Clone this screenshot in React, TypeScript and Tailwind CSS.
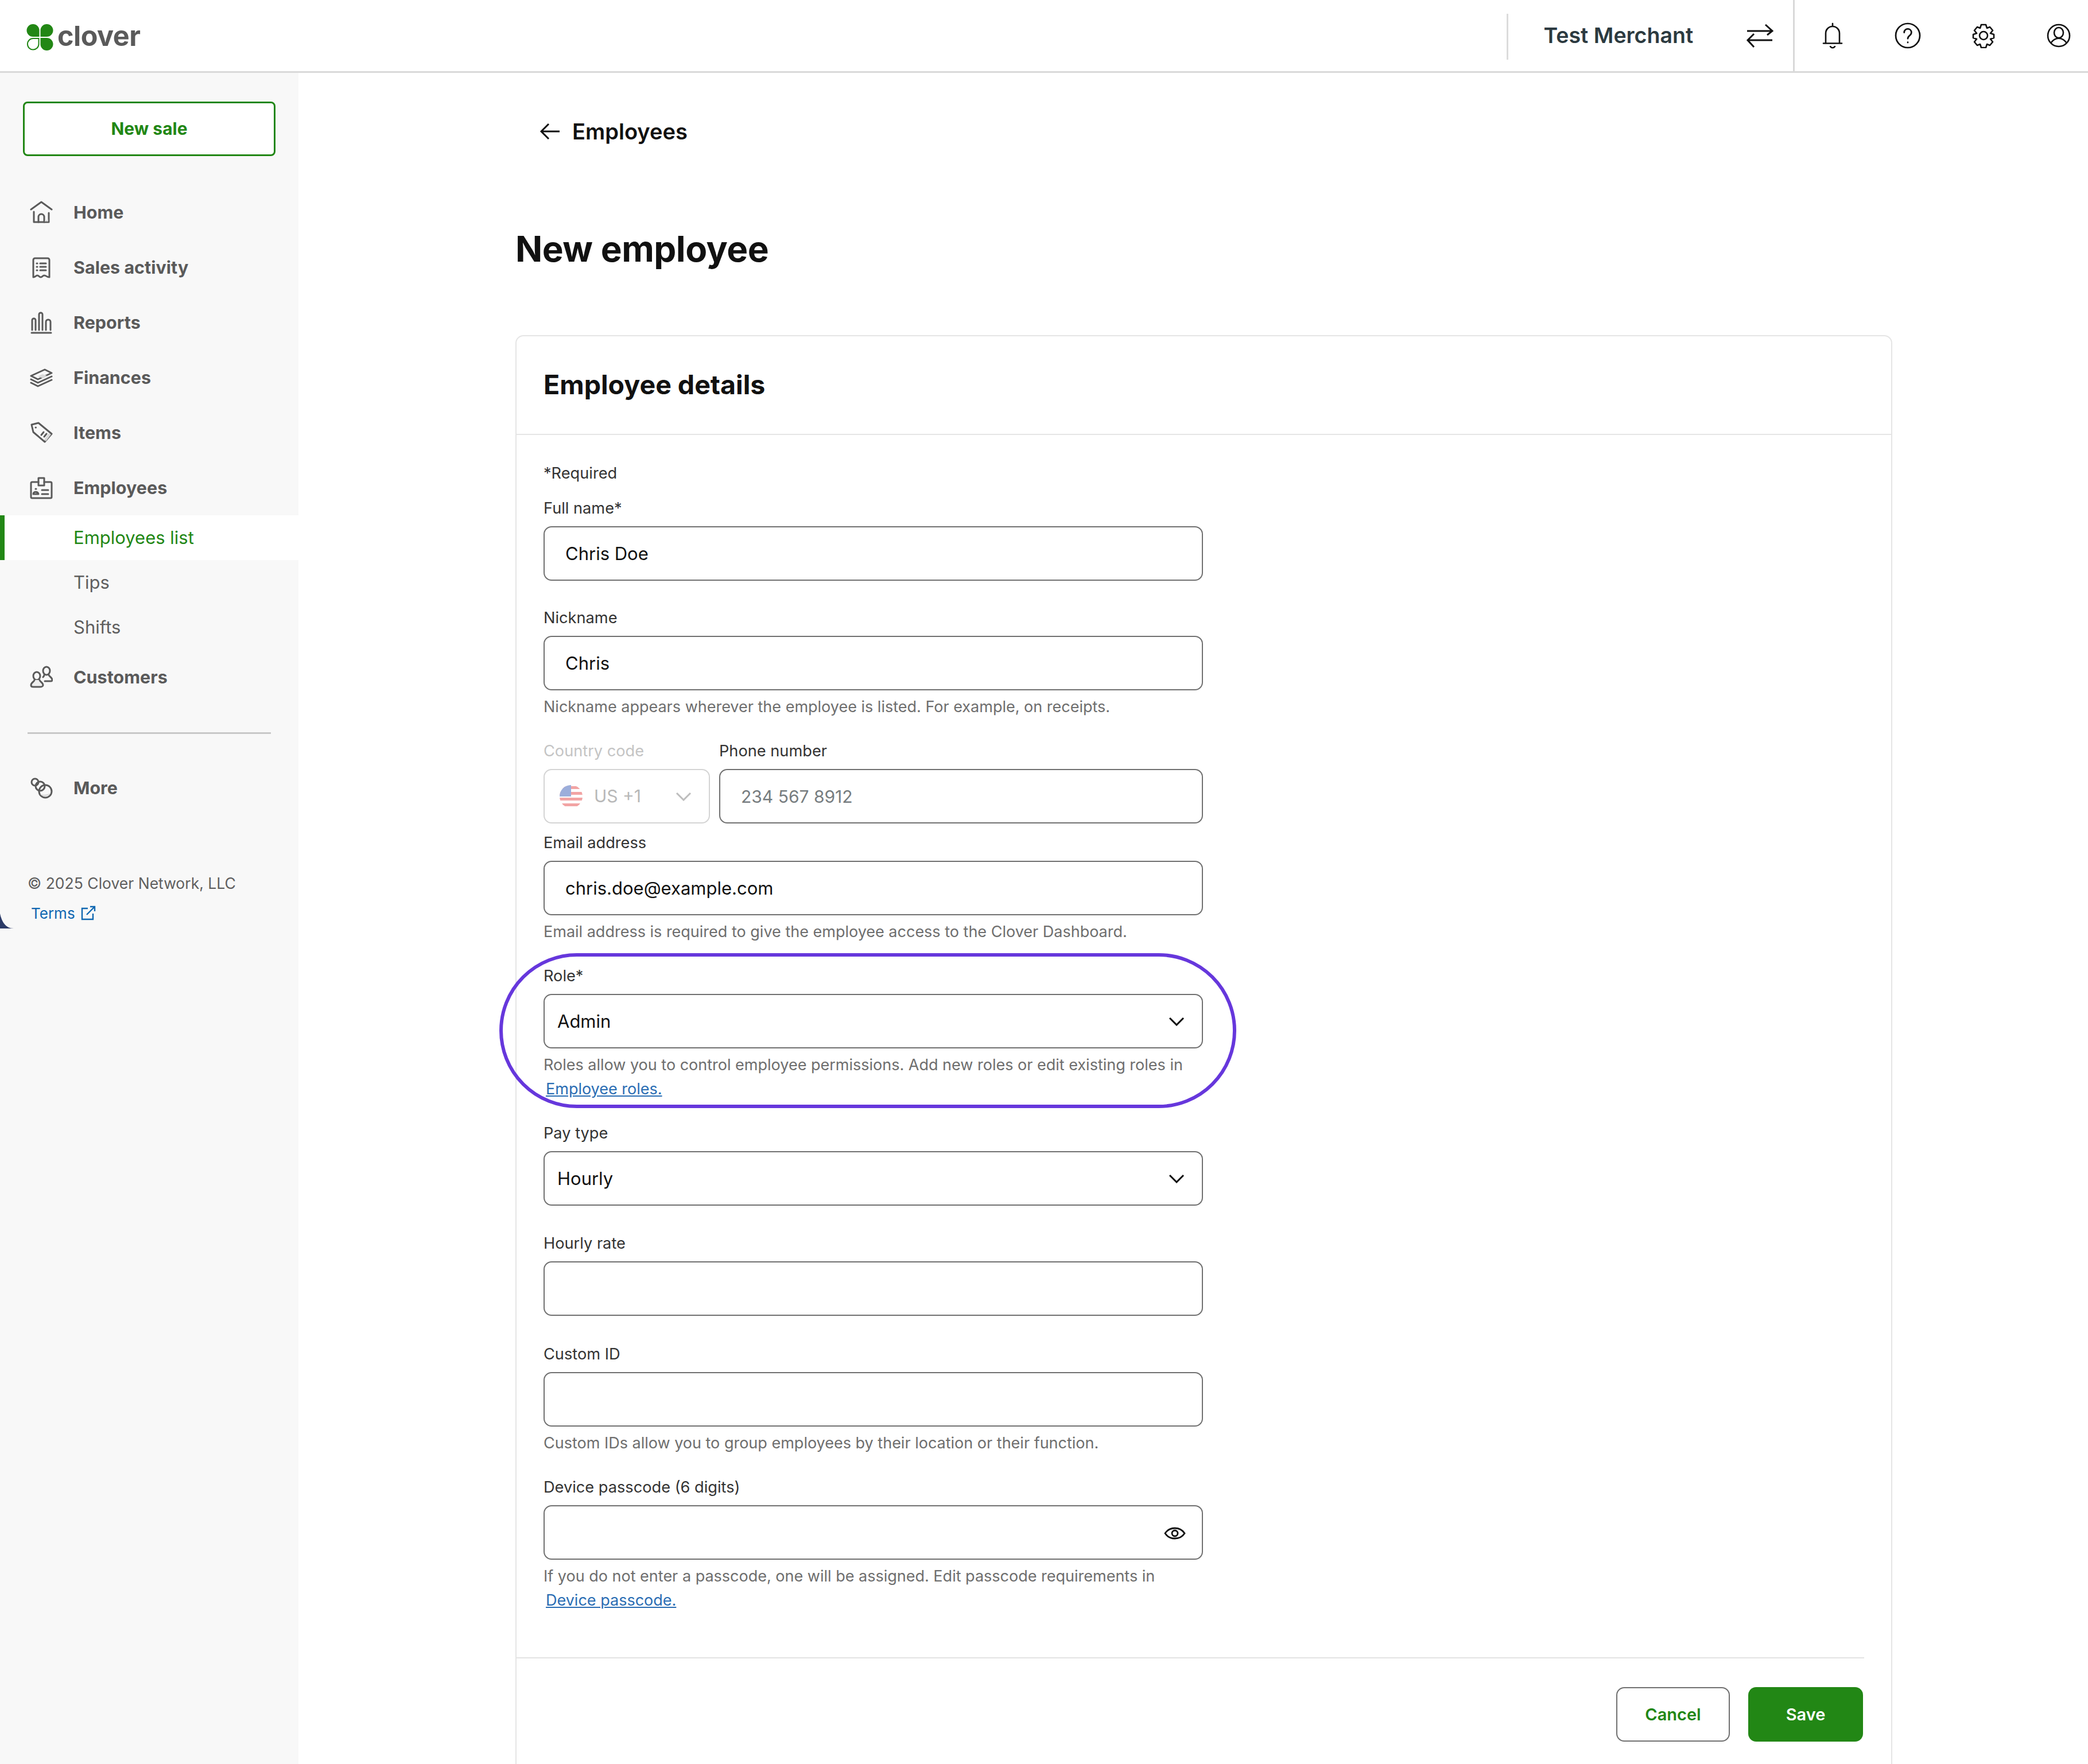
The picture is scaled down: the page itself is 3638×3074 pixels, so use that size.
import type { ReactNode } from "react";

const ink = "#5a5a5a";

function NavSvg({ children }: { children: ReactNode }) {
  return (
    <svg viewBox="0 0 40 40" fill="none" stroke={ink} strokeWidth={3} strokeLinecap="round" strokeLinejoin="round" className="w-[40px] h-[40px]">
      {children}
    </svg>
  );
}

const HomeIcon = () => (
  <NavSvg>
    <path d="M2 15 20 2l18 13" />
    <path d="M7 19v18h26V21" />
    <path d="M15 37V28a5 5 0 0 1 10 0v9" />
    <path d="M26 35l6-3v4h-6z" fill="#d9d9d9" stroke="none" />
  </NavSvg>
);
const ReceiptIcon = () => (
  <NavSvg>
    <path d="M6 37V7a3 3 0 0 1 3-3h22a3 3 0 0 1 3 3v30c-5 0-5-3-9-3-3 0-3 3-6 3s-3-3-6-3c-3 0-3 3-7 3z" />
    <path d="M12 13h1M12 19h1M12 25h1M18 13h10M18 19h10M18 25h10" />
  </NavSvg>
);
const ReportsIcon = () => (
  <NavSvg>
    <path d="M3 38h34" />
    <path d="M4 33V16a3 3 0 0 1 6 0v17M16 33V6a3 3 0 0 1 6 0v27M28 33V19a4 4 0 0 1 8 0v14" />
  </NavSvg>
);
const FinancesIcon = () => (
  <NavSvg>
    <path d="M2 17 26 6l12 6-24 11z" />
    <path d="M14 18l8-4 8 3-8 4z" fill="#d9d9d9" stroke="none" />
    <path d="M2 23l12 6 24-11M2 29l12 6 24-11" />
  </NavSvg>
);
const TagIcon = () => (
  <NavSvg>
    <path d="M3 6l12-3 23 19-12 14L6 19z" />
    <path d="M10 11h.5M20 24l4-5M25 27l4-5" />
    <path d="M28 35l9-12-4-2-8 11z" fill="#d9d9d9" stroke="none" />
  </NavSvg>
);
const BadgeIcon = () => (
  <NavSvg>
    <path d="M15 10H4a2 2 0 0 0-2 2v24a2 2 0 0 0 2 2h32a2 2 0 0 0 2-2V12a2 2 0 0 0-2-2H25" />
    <path d="M15 3h10v13H15z" />
    <path d="M10 22h1M6 31c0-5 8-5 9 0zM21 24h11M21 31h11" />
  </NavSvg>
);
const CustomersIcon = () => (
  <NavSvg>
    <ellipse cx="12" cy="18" rx="6" ry="7" />
    <path d="M8 25c0 3-6 4-6 9 0 2 2 3 4 3h12c2 0 5-1 5-3 0-5-6-6-6-9" fill="#eeeeee" />
    <ellipse cx="29" cy="9" rx="6" ry="7" />
    <path d="M25 16c0 2-1 3-2 4M33 16c0 3 6 4 6 9 0 1-1 2-3 2H26" />
  </NavSvg>
);
const MoreIcon = () => (
  <NavSvg>
    <circle cx="9" cy="10" r="6" />
    <circle cx="18" cy="17" r="8" />
    <circle cx="27" cy="26" r="11" />
    <path d="M18 31c4 5 14 5 19-3-3 3-12 5-19 3z" fill="#d9d9d9" stroke="none" />
  </NavSvg>
);

function CloverLogo() {
  return (
    <svg viewBox="0 0 47 46" className="w-[47px] h-[46px]" fill="#228715">
      <path d="M22.5 22H11.5A11 11 0 1 1 22.5 11Z" />
      <path d="M24.5 22H35.5A11 11 0 1 0 24.5 11Z" />
      <path d="M24.5 24H35.5A11 11 0 1 1 24.5 35Z" />
      <path d="M21.5 25H11.5A9.8 9.8 0 1 0 21.5 35Z" fill="none" stroke="#228715" strokeWidth={2} />
    </svg>
  );
}

function MainNav({ icon, label }: { icon: ReactNode; label: string }) {
  return (
    <div className="h-[96px] flex items-center pl-[52px]">
      <div className="w-[40px] h-[40px] shrink-0">{icon}</div>
      <span className="ml-[36px] text-[30.5px] font-bold text-[#5a5a5a]">{label}</span>
    </div>
  );
}

function Sidebar() {
  return (
    <aside className="relative w-[520px] shrink-0 bg-[#f8f8f8] pt-[50px]">
      <div className="mx-[40px] h-[95px] rounded-[8px] border-[3px] border-[#228715] bg-white flex items-center justify-center text-[30px] font-bold text-[#228715]">
        New sale
      </div>
      <div className="mt-[50px]">
        <MainNav icon={<HomeIcon />} label="Home" />
        <MainNav icon={<ReceiptIcon />} label="Sales activity" />
        <MainNav icon={<ReportsIcon />} label="Reports" />
        <MainNav icon={<FinancesIcon />} label="Finances" />
        <MainNav icon={<TagIcon />} label="Items" />
        <MainNav icon={<BadgeIcon />} label="Employees" />
      </div>
      <div className="h-[78px] bg-white border-l-[8px] border-[#228715] flex items-center pl-[120px] text-[31px] text-[#228715]">
        Employees list
      </div>
      <div className="h-[78px] flex items-center pl-[128px] text-[31px] text-[#5f5f5f]">Tips</div>
      <div className="h-[78px] flex items-center pl-[128px] text-[31px] text-[#5f5f5f]">Shifts</div>
      <MainNav icon={<CustomersIcon />} label="Customers" />
      <div className="mt-[48px] mx-[48px] h-[3px] bg-[#c8c8c8]" />
      <div className="mt-[46px]">
        <MainNav icon={<MoreIcon />} label="More" />
      </div>
      <div className="mt-[97px] pl-[48px] h-[44px] flex items-center text-[26.5px] text-[#5f5f5f]">© 2025 Clover Network, LLC</div>
      <div className="mt-[7px] pl-[54px] h-[44px] flex items-center gap-[10px] text-[26px] text-[#0f67b1]">
        <span>Terms</span>
        <svg viewBox="0 0 26 26" fill="none" stroke="#0f67b1" strokeWidth={2.4} className="w-[26px] h-[26px]">
          <path d="M12 5H2v19h19V14M10 16 24 2M16 2h8v8" />
        </svg>
      </div>
      <svg viewBox="0 0 24 26" className="absolute left-0 top-[1465px] w-[24px] h-[26px]" fill="#2b3a67">
        <path d="M0 0V26H24C10 26 3 14 0 0Z" />
      </svg>
    </aside>
  );
}

function TopBar() {
  return (
    <header className="h-[127px] border-b-[3px] border-[#d9d9d9] flex bg-white">
      <div className="pl-[46px] pt-[42px] flex items-start">
        <CloverLogo />
        <span className="ml-[7px] mt-[-14px] text-[48.5px] font-bold leading-[70px] tracking-[-0.5px] text-[#5a5a5a]">clover</span>
      </div>
      <div className="ml-auto flex">
        <div className="w-[3px] h-[80px] mt-[24px] bg-[#dcdcdc]" />
        <div className="h-[124px] ml-[62px] w-[260px] flex items-center text-[37.5px] font-semibold text-[#2c3a40] whitespace-nowrap">Test Merchant</div>
        <div className="w-[92px] h-[124px] flex items-center justify-center ml-[70px] mr-[12px]">
          <svg viewBox="0 0 48 44" fill="none" stroke="#111" strokeWidth={3} className="w-[48px] h-[44px]">
            <path d="M2 14H46M34 3l12 11-9 7M46 30H3M14 19 3 30l11 12" />
          </svg>
        </div>
        <div className="w-[3px] h-[124px] bg-[#d9d9d9]" />
        <div className="flex items-center gap-[87.5px] pl-[44px] pr-[29px]">
          <svg viewBox="0 0 44 48" fill="none" stroke="#111" strokeWidth={2.6} strokeLinecap="round" className="w-[44px] h-[48px]">
            <path d="M22 3v4M10 37V20a12 12 0 0 1 24 0v17" />
            <path d="M6 37.5h32" />
            <path d="M18 43c2 3 6 3 8 0" />
          </svg>
          <svg viewBox="0 0 44 44" fill="none" stroke="#111" strokeWidth={2.6} strokeLinecap="round" className="w-[44px] h-[44px] scale-105">
            <circle cx="22" cy="22" r="20" />
            <path d="M16 17c0-8 12-8 12 0 0 5-6 5-6 10M22 33v.5" />
          </svg>
          <svg viewBox="0 0 44 44" fill="none" stroke="#111" strokeWidth={2.6} strokeLinejoin="round" className="w-[44px] h-[44px]">
            <path d="M18 3h8l2 6 5-2 5 6-4 5 6 2v6l-6 2 4 5-5 6-5-2-2 6h-8l-2-6-5 2-5-6 4-5-6-2v-6l6-2-4-5 5-6 5 2z" />
            <circle cx="22" cy="22" r="7" />
          </svg>
          <svg viewBox="0 0 44 44" fill="none" stroke="#111" strokeWidth={2.6} className="w-[44px] h-[44px]">
            <circle cx="22" cy="22" r="19" />
            <ellipse cx="22" cy="17" rx="8" ry="9" />
            <path d="M8 35c8-11 20-11 28 0" />
          </svg>
        </div>
      </div>
    </header>
  );
}

function Label({ children, faded }: { children: ReactNode; faded?: boolean }) {
  return (
    <div className={`h-[46px] mb-[8px] flex items-center text-[27.2px] ${faded ? "text-[#c4c4c4]" : "text-[#333333]"}`}>{children}</div>
  );
}

function Help({ children }: { children: ReactNode }) {
  return <div className="mt-[8px] mb-[-1px] text-[27px] leading-[42px] text-[#6e6e6e]">{children}</div>;
}

function HelpLink({ children }: { children: ReactNode }) {
  return <span className="block pl-[4px] text-[#2a6db3] underline">{children}</span>;
}

function TextBox({ value, placeholder, children }: { value?: string; placeholder?: string; children?: ReactNode }) {
  return (
    <div className="h-[95px] rounded-[14px] border-[2.5px] border-[#707070] bg-white flex items-center pl-[36px] pt-[2px] text-[31px] text-[#111]">
      {value}
      {placeholder && <span className="text-[30px] text-[#777d80]">{placeholder}</span>}
      {children}
    </div>
  );
}

function Chevron({ className, color }: { className: string; color: string }) {
  return (
    <svg viewBox="0 0 28 16" fill="none" stroke={color} strokeWidth={3} className={className}>
      <path d="M2 2 14 14 26 2" />
    </svg>
  );
}

function SelectBox({ value }: { value: string }) {
  return (
    <div className="h-[95px] rounded-[14px] border-[2.5px] border-[#707070] bg-white flex items-center pl-[22px] pr-[30px] justify-between text-[31px] text-[#111]">
      <span className="pt-[2px]">{value}</span>
      <Chevron className="w-[28px] h-[16px]" color="#111" />
    </div>
  );
}

function UsFlag() {
  return (
    <svg viewBox="0 0 40 40" className="w-[40px] h-[40px] opacity-50">
      <defs>
        <clipPath id="flagc">
          <circle cx="20" cy="20" r="20" />
        </clipPath>
      </defs>
      <g clipPath="url(#flagc)">
        <rect width="40" height="40" fill="#ffffff" />
        <rect y="2" width="40" height="5" fill="#e64b4b" />
        <rect y="12" width="40" height="5" fill="#e64b4b" />
        <rect y="22" width="40" height="5" fill="#e64b4b" />
        <rect y="32" width="40" height="5" fill="#e64b4b" />
        <rect width="20" height="20" fill="#3c5fb8" />
      </g>
    </svg>
  );
}

function EmployeeForm() {
  return (
    <div className="w-[1149px] ml-[47px]">
      <div className="h-[46px] mt-[44px] flex items-center text-[27.2px] text-[#333333]">*Required</div>
      <div className="mt-[15px]">
        <Label>Full name*</Label>
        <TextBox value="Chris Doe" />
      </div>
      <div className="mt-[42px]">
        <Label>Nickname</Label>
        <TextBox value="Chris" />
        <Help>Nickname appears wherever the employee is listed. For example, on receipts.</Help>
      </div>
      <div className="mt-[34px] flex gap-[16px]">
        <div className="w-[290px] shrink-0">
          <Label faded>Country code</Label>
          <div className="h-[95px] rounded-[14px] border-[2.5px] border-[#d4d4d4] bg-white flex items-center pl-[26px] pr-[30px] text-[30px] text-[#b8b8b8]">
            <UsFlag />
            <span className="ml-[20px]">US +1</span>
            <Chevron className="ml-auto w-[28px] h-[16px]" color="#bdbdbd" />
          </div>
        </div>
        <div className="flex-1">
          <Label>Phone number</Label>
          <TextBox placeholder="234 567 8912" />
        </div>
      </div>
      <div className="mt-[11px]">
        <Label>Email address</Label>
        <TextBox value="chris.doe@example.com" />
        <Help>Email address is required to give the employee access to the Clover Dashboard.</Help>
      </div>
      <div className="mt-[34px]">
        <Label>Role*</Label>
        <SelectBox value="Admin" />
        <Help>
          Roles allow you to control employee permissions. Add new roles or edit existing roles in
          <HelpLink>Employee roles.</HelpLink>
        </Help>
      </div>
      <div className="mt-[34px]">
        <Label>Pay type</Label>
        <SelectBox value="Hourly" />
      </div>
      <div className="mt-[43px]">
        <Label>Hourly rate</Label>
        <TextBox />
      </div>
      <div className="mt-[44px]">
        <Label>Custom ID</Label>
        <TextBox />
        <Help>Custom IDs allow you to group employees by their location or their function.</Help>
      </div>
      <div className="mt-[34px]">
        <Label>Device passcode (6 digits)</Label>
        <TextBox>
          <svg viewBox="0 0 38 26" fill="none" stroke="#111" strokeWidth={2.8} className="ml-auto mr-[28px] w-[38px] h-[26px]">
            <path d="M2 13C10 1 28 1 36 13 28 25 10 25 2 13Z" />
            <circle cx="19" cy="13" r="5" />
          </svg>
        </TextBox>
        <Help>
          If you do not enter a passcode, one will be assigned. Edit passcode requirements in
          <HelpLink>Device passcode.</HelpLink>
        </Help>
      </div>
    </div>
  );
}

export default function App() {
  return (
    <div className="relative w-[3638px] h-[3074px] overflow-hidden bg-white font-['Inter',sans-serif]">
      <TopBar />
      <div className="flex h-[2947px]">
        <Sidebar />
        <main className="flex-1 pl-[378px]">
          <div className="h-[206px] pl-[42px] pt-[52px]">
            <div className="flex items-center h-[100px]">
              <svg viewBox="0 0 36 30" fill="none" stroke="#111" strokeWidth={3} className="w-[36px] h-[30px]">
                <path d="M35 15H3M16 2 3 15l13 13" />
              </svg>
              <span className="ml-[21px] text-[38px] font-semibold text-[#111]">Employees</span>
            </div>
          </div>
          <h1 className="h-[100px] mt-[50px] flex items-center text-[62px] font-bold text-[#111] tracking-[-0.5px]">New employee</h1>
          <section className="mt-[101px] w-[2399px] h-[2600px] rounded-t-[14px] border-2 border-[#e5e5e5]">
            <div className="h-[172px] border-b-2 border-[#e5e5e5] pl-[47px] flex items-center text-[46.5px] font-bold text-[#111]">Employee details</div>
            <EmployeeForm />
            <div className="mt-[79px] mr-[47px] border-t-2 border-[#e3e3e3] pt-[50px] pr-[2px] flex justify-end gap-[32px]">
              <div className="w-[198px] h-[95px] rounded-[14px] border-[2.5px] border-[#707070] flex items-center justify-center text-[29px] font-semibold text-[#228715]">Cancel</div>
              <div className="w-[200px] h-[95px] rounded-[14px] bg-[#228715] flex items-center justify-center text-[29px] font-semibold text-white">Save</div>
            </div>
          </section>
        </main>
      </div>
      <div className="absolute left-[870px] top-[1661px] w-[1284px] h-[270px] rounded-[135px] border-[6px] border-[#6637dc]" />
    </div>
  );
}
